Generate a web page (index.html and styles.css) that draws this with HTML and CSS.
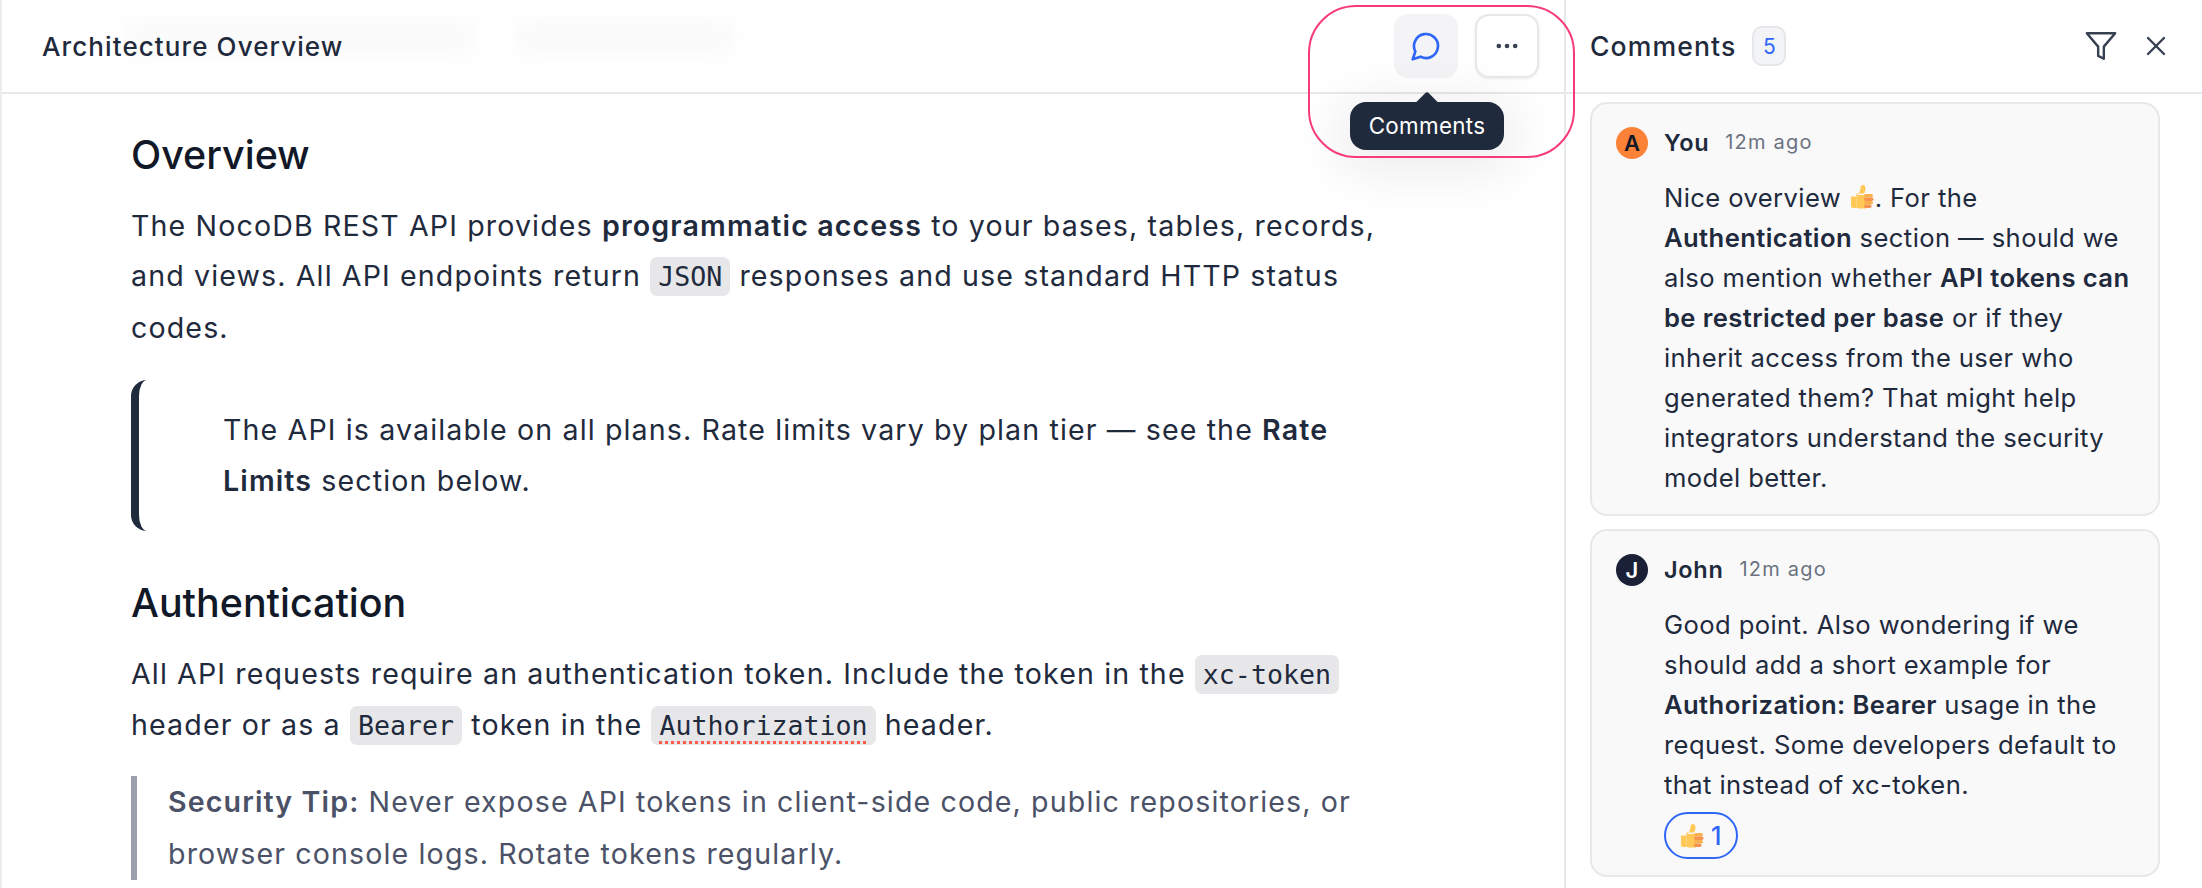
FILE: index.html
```html
<!DOCTYPE html>
<html lang="en">
<head>
    <meta charset="UTF-8">
    <meta name="viewport" content="width=device-width, initial-scale=1.0">
    <title>Architecture Overview</title>
    <link rel="stylesheet" href="styles.css">
</head>
<body>
    <svg class="defs" width="0" height="0">
        <symbol id="thumb" viewBox="0 0 26 26">
            <path d="M2 12.5h5.5v11.5h-3.5a2 2 0 0 1-2-2z" fill="#ffc857"/>
            <path d="M7.5 12c2.5-2.2 3.800-5 4-8 .1-1.800 1-3 2.500-3 1.800 0 2.800 1.700 2.500 4-.2 1.700-.7 3.200-1.200 4.500h-7.800z" fill="#ffc857"/>
            <path d="M7.500 11h9.500v13.500h-7.500c-1.200 0-2-.8-2-2z" fill="#ffc857"/>
            <rect x="15" y="10" width="9" height="3.500" rx="1.700" fill="#fbb04f"/>
            <rect x="15" y="13.500" width="9.500" height="3.500" rx="1.700" fill="#f79350"/>
            <rect x="15" y="17" width="9" height="3.500" rx="1.700" fill="#fbb04f"/>
            <rect x="15" y="20.500" width="7.500" height="3.500" rx="1.700" fill="#f79350"/>
        </symbol>
    </svg>

    <!-- blurred bit of the page behind the header -->
    <div class="ghost ghost-one"></div>
    <div class="ghost ghost-two"></div>

    <div class="app">
        <div class="doc">
            <header class="doc-header">
                <h1>Architecture Overview</h1>
                <div class="doc-actions">
                    <button class="icon-btn active">
                        <svg width="32" height="32" viewBox="0 0 24 24" fill="none" stroke="#2f66f6" stroke-width="2" stroke-linecap="round" stroke-linejoin="round"><path d="M7.900 20A9 9 0 1 0 4 16.100L2 22Z"/></svg>
                    </button>
                    <button class="icon-btn outlined">
                        <svg width="28" height="28" viewBox="0 0 24 24" fill="#374151"><circle cx="5" cy="12" r="2"/><circle cx="12" cy="12" r="2"/><circle cx="19" cy="12" r="2"/></svg>
                    </button>
                </div>
            </header>

            <main class="doc-body">
                <h2>Overview</h2>
                <p>The NocoDB REST API provides <strong>programmatic access</strong> to your bases, tables, records, and views. All API endpoints return <code>JSON</code> responses and use standard HTTP status codes.</p>
                <blockquote class="note">The API is available on all plans. Rate limits vary by plan tier — see the <strong>Rate Limits</strong> section below.</blockquote>

                <h2>Authentication</h2>
                <p>All API requests require an authentication token. Include the token in the <code>xc-token</code> header or as a <code>Bearer</code> token in the <code><span class="misspelled">Authorization</span></code> header.</p>
                <blockquote class="tip"><strong>Security Tip:</strong> Never expose API tokens in client-side code, public repositories, or browser console logs. Rotate tokens regularly.</blockquote>
            </main>
        </div>

        <aside class="panel">
            <header class="panel-header">
                <h3>Comments</h3>
                <span class="count">5</span>
                <div class="panel-actions">
                    <svg width="34" height="34" viewBox="0 0 24 24" fill="none" stroke="#374151" stroke-width="1.700" stroke-linecap="round" stroke-linejoin="round"><polygon points="22 3 2 3 10 12.460 10 19 14 21 14 12.460 22 3"/></svg>
                    <svg width="32" height="32" viewBox="0 0 24 24" fill="none" stroke="#374151" stroke-width="1.800" stroke-linecap="round" stroke-linejoin="round"><path d="M18 6 6 18"/><path d="m6 6 12 12"/></svg>
                </div>
            </header>

            <div class="comment-list">
                <article class="comment">
                    <div class="comment-head">
                        <span class="avatar orange">A</span>
                        <span class="name">You</span>
                        <span class="time">12m ago</span>
                    </div>
                    <div class="comment-text">
                        Nice overview <svg class="emoji"><use href="#thumb"/></svg>. For the <strong>Authentication</strong> section — should we also mention whether <strong>API tokens can be restricted per base</strong> or if they inherit access from the user who generated them? That might help integrators understand the security model better.
                    </div>
                </article>

                <article class="comment">
                    <div class="comment-head">
                        <span class="avatar dark">J</span>
                        <span class="name">John</span>
                        <span class="time">12m ago</span>
                    </div>
                    <div class="comment-text">
                        Good point. Also wondering if we should add a short example for <strong>Authorization: Bearer</strong> usage in the request. Some developers default to that instead of xc-token.
                    </div>
                    <button class="reaction"><svg class="emoji"><use href="#thumb"/></svg>1</button>
                </article>
            </div>
        </aside>
    </div>

    <div class="tooltip">Comments</div>
    <div class="highlight"></div>
</body>
</html>
```

FILE: styles.css
```css
* {
    box-sizing: border-box;
}

html, body {
    height: 100%;
}

body {
    margin: 0;
    overflow: hidden;
    background: #fff;
    color: #1f2a3d;
    font-family: Inter, "Noto Sans", sans-serif;
}

.defs {
    position: absolute;
}

.app {
    position: relative;
    display: flex;
    height: 100%;
}

/* document side */
.doc {
    width: 1566px;
    flex-shrink: 0;
    border-left: 2px solid #ececee;
    border-right: 2px solid #e8e8ea;
}

.doc-header {
    height: 94px;
    display: flex;
    align-items: center;
    justify-content: space-between;
    padding: 0 25px 0 40px;
    border-bottom: 2px solid #e8e8ea;
}

h1 {
    margin: 0;
    font-size: 26px;
    font-weight: 500;
    letter-spacing: 1.1px;
}

.doc-actions {
    display: flex;
    gap: 17px;
    margin-top: -1px;
}

.icon-btn {
    width: 64px;
    height: 64px;
    display: flex;
    align-items: center;
    justify-content: center;
    padding: 0;
    border: none;
    border-radius: 14px;
    background: #fff;
}

.icon-btn.active {
    background: #f4f4f6;
}

.icon-btn.outlined {
    border: 2px solid #e8e8ea;
    box-shadow: 0 1px 3px rgba(0, 0, 0, 0.08);
}

.doc-body {
    width: 1400px;
    padding: 36px 0 0 129px;
    font-size: 28.600px;
    line-height: 50.4px;
    letter-spacing: 1.12px;
}

h2 {
    margin: 0 0 21px;
    color: #111827;
    font-size: 39.4px;
    line-height: 50px;
    font-weight: 500;
    letter-spacing: 0;
}

p {
    margin: 0 0 27px;
}

strong {
    font-weight: 600;
}

code {
    padding: 4px 8px;
    border-radius: 7px;
    background: #e7e7ea;
    font-family: "DejaVu Sans Mono", monospace;
    font-size: 26.600px;
    letter-spacing: 0;
}

.misspelled {
    text-decoration: underline dotted #ff5a4a 2.500px;
    text-underline-offset: 6px;
}

.note {
    margin: 0 0 47px;
    padding: 25px 40px 25px 84px;
    border-left: 8.400px solid #1f2a3d;
    border-radius: 16px;
}

.tip {
    margin: -3px 0 0;
    padding-left: 31px;
    border-left: 6px solid #9ca0ae;
    color: #4b5268;
    line-height: 52px;
}

/* comments side */
.panel {
    flex: 1;
    min-width: 0;
}

.panel-header {
    height: 94px;
    display: flex;
    align-items: center;
    gap: 16px;
    padding: 0 30px 0 24px;
    border-bottom: 2px solid #e8e8ea;
}

h3 {
    margin: 0;
    font-size: 26.600px;
    font-weight: 500;
    letter-spacing: 1.100px;
}

.count {
    width: 34px;
    height: 40px;
    display: flex;
    align-items: center;
    justify-content: center;
    border: 2px solid #e7e7ea;
    border-radius: 10px;
    background: #f3f4f6;
    color: #2f66f6;
    font-size: 21px;
}

.panel-actions {
    margin-left: auto;
    display: flex;
    align-items: center;
    gap: 22px;
}

.comment-list {
    display: flex;
    flex-direction: column;
    gap: 13px;
    margin: 8px 42px 0 24px;
}

.comment {
    padding: 23px 24px 16px 24px;
    border: 2px solid #e8e8ea;
    border-radius: 17px;
    background: #f9f9fa;
}

.comment-head {
    display: flex;
    align-items: center;
    height: 32px;
}

.avatar {
    width: 32px;
    height: 32px;
    display: flex;
    align-items: center;
    justify-content: center;
    border-radius: 50%;
    font-size: 22px;
    font-weight: 600;
}

.avatar.orange {
    background: #fb8237;
    color: #111827;
}

.avatar.dark {
    background: #1a2035;
    color: #fff;
}

.name {
    margin-left: 16px;
    margin-top: -2px;
    font-size: 23.500px;
    font-weight: 600;
    letter-spacing: 0.700px;
}

.time {
    margin-left: 16px;
    margin-top: -2px;
    color: #6b7280;
    font-size: 20px;
    letter-spacing: 1.200px;
}

.comment-text {
    margin-top: 19px;
    padding-left: 48px;
    font-size: 25.600px;
    line-height: 40px;
    letter-spacing: 0.400px;
}

.emoji {
    width: 26px;
    height: 26px;
    vertical-align: -3px;
}

.reaction {
    display: flex;
    align-items: center;
    gap: 6px;
    height: 47px;
    margin: 7px 0 0 48px;
    padding: 0 15px 0 13px;
    border: 2px solid #2f66f6;
    border-radius: 24px;
    background: transparent;
    color: #2f66f6;
    font-family: inherit;
    font-size: 25.200px;
    font-weight: 500;
}

/* overlays */
.ghost {
    position: absolute;
    top: 20px;
    height: 34px;
    background: #fafafa;
    filter: blur(10px);
}

.ghost-one {
    left: 125px;
    width: 350px;
}

.ghost-two {
    left: 515px;
    width: 220px;
}

.tooltip {
    position: absolute;
    left: 1350px;
    top: 102px;
    width: 154px;
    height: 48px;
    display: flex;
    align-items: center;
    justify-content: center;
    padding-bottom: 2px;
    border-radius: 16px;
    background: #1f2a3d;
    color: #fff;
    font-size: 22.400px;
    letter-spacing: 0.300px;
    box-shadow: 0 10px 50px 14px rgba(0, 0, 0, 0.07);
}

.tooltip::before {
    content: "";
    position: absolute;
    left: 68px;
    top: -7px;
    width: 18px;
    height: 18px;
    border-radius: 3px;
    background: #1f2a3d;
    transform: rotate(45deg);
}

.highlight {
    position: absolute;
    left: 1308px;
    top: 5px;
    width: 267px;
    height: 153px;
    border: 2px solid #f63b76;
    border-radius: 48px;
}
```
